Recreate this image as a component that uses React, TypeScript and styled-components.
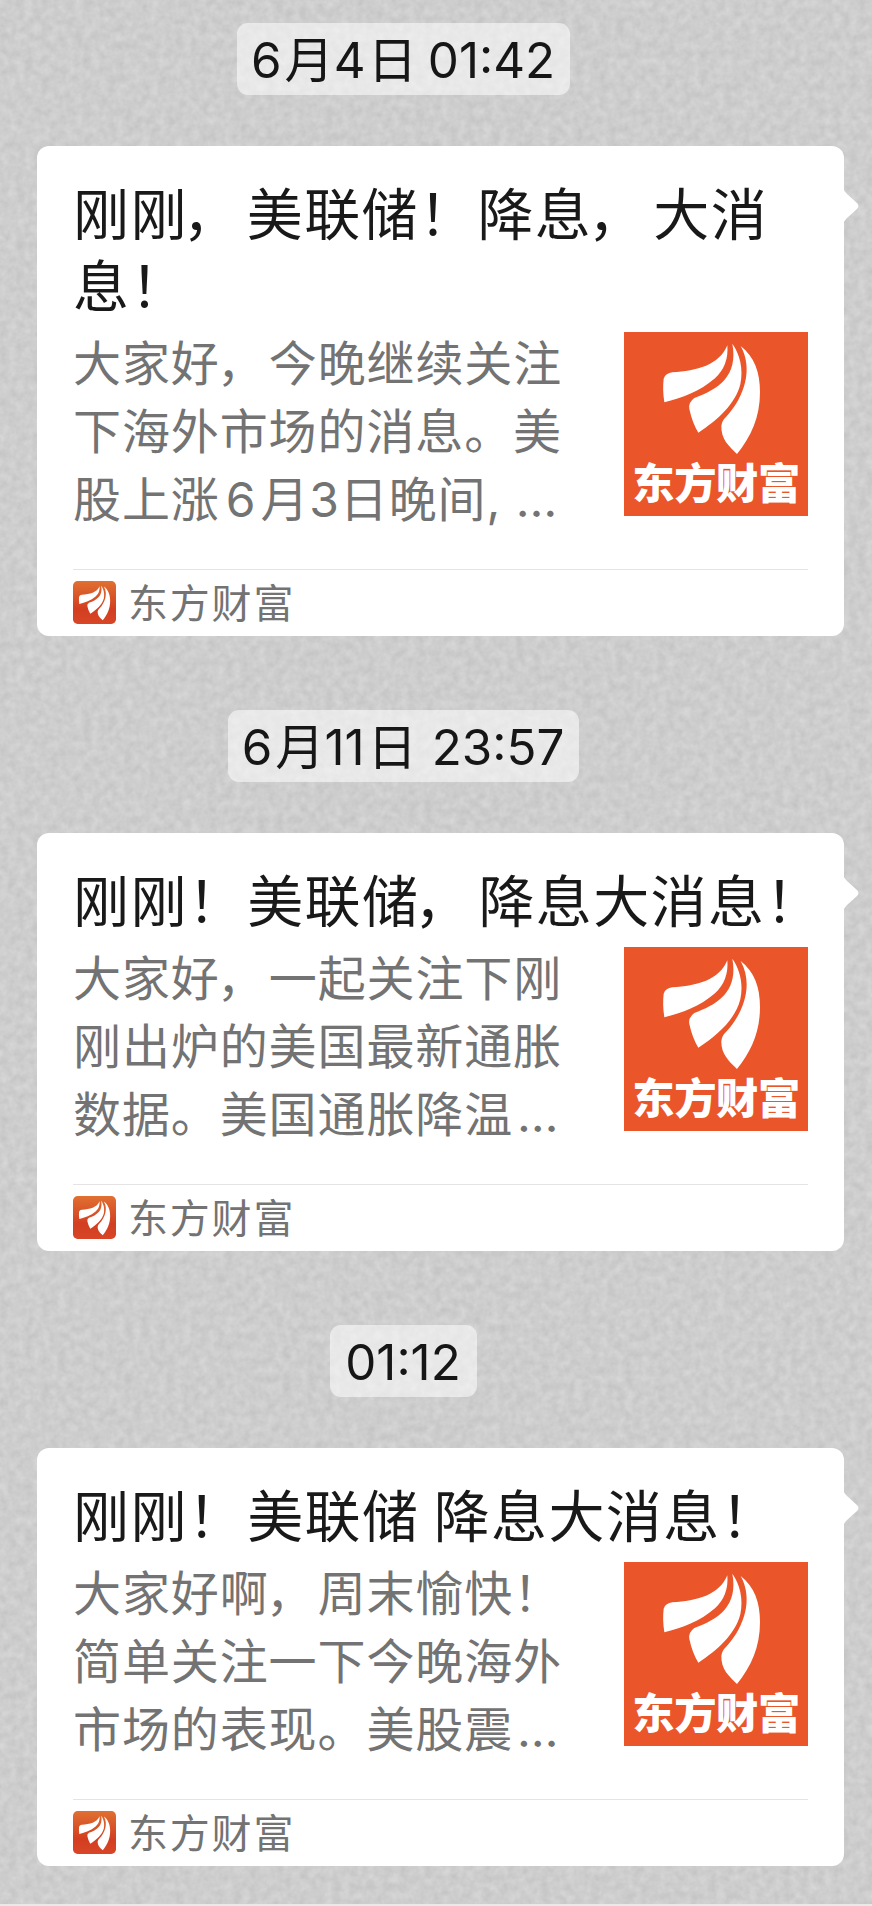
import React from 'react';
import styled, { createGlobalStyle } from 'styled-components';

const Global = createGlobalStyle`
  * { box-sizing: border-box; }
  body { margin: 0; background: #cdcdcd; }
`;

const Chat = styled.main`
  position: relative;
  display: flex;
  flex-direction: column;
  width: 872px;
  height: 1906px;
  overflow: hidden;
  padding: 23px 28px 0 37px;
  border-bottom: 2px solid #e9e9e9;
  background: #cdcdcd;
  font-family: Inter, 'Noto Sans CJK SC', sans-serif;
`;

const Grain = styled.svg`
  position: absolute;
  inset: 0;
  width: 100%;
  height: 100%;
`;

const Message = styled.section`
  position: relative;
  display: flex;
  flex-direction: column;
  width: 807px;
  margin-bottom: 74px;
`;

const Stamp = styled.time<{ $width: number }>`
  align-self: center;
  width: ${p => p.$width}px;
  height: 72px;
  margin: 0 75px 51px 0;
  border-radius: 11px;
  background: rgba(255, 255, 255, 0.55);
  color: #161616;
  font-size: 49.3px;
  line-height: 74px;
  text-align: center;
  white-space: pre;
`;

const Card = styled.article`
  position: relative;
  padding: 33px 36px 0;
  border-radius: 12px;
  background: #fff;
`;

const Tail = styled.svg`
  position: absolute;
  left: 806px;
  top: 42px;
  width: 16px;
  height: 36px;
`;

const Title = styled.h2`
  margin: 0;
  color: #191919;
  font-size: 56px;
  font-weight: 400;
  line-height: 72px;
  letter-spacing: 1.4px;
  white-space: pre;
`;

const Summary = styled.div`
  display: flex;
  justify-content: space-between;
  height: 210px;
  margin-top: 7px;
`;

const Excerpt = styled.div`
  color: #737373;
  font-size: 48px;
  line-height: 68px;
  letter-spacing: 0.9px;
  white-space: pre;
`;

const Row = styled.div`
  display: block;
`;

const Kern = styled.span<{ $gap: number }>`
  margin-left: ${p => p.$gap}px;
`;

const Tight = styled.span<{ $gap: number }>`
  letter-spacing: ${p => p.$gap}px;
`;

const Thumb = styled.svg`
  width: 184px;
  height: 184px;
  margin-top: 2px;
  flex: none;
`;

const Source = styled.footer`
  display: flex;
  gap: 12px;
  height: 67px;
  margin-top: 29px;
  border-top: 1px solid #e4e4e4;
  color: #737373;
  font-size: 40px;
  line-height: 68px;
  letter-spacing: 1.8px;
`;

const AppIcon = styled.svg`
  width: 43px;
  height: 43px;
  margin-top: 11px;
  flex: none;
`;

const Leaves = () => (
  <g fill="#fff">
    <path d="M310 40C286 99 219 117 145 121Q125 123 119 140Q115 174 121 211C174 198 228 178 273 139Q315 100 310 40Z" />
    <path d="M325 35C347 66 359 110 349 157C334 216 282 264 223 302Q205 273 196 231Q192 212 211 198C284 171 343 132 325 35Z" />
    <path d="M350 42C391 75 408 119 408 180C408 256 381 314 339 366C314 342 291 321 292 282Q293 267 308 253C362 193 388 111 350 42Z" />
  </g>
);

// A line of text; a number widens or tightens the gap between its neighbours.
type Line = (string | number)[];

const Pieces = ({ line }: { line: Line }) => (
  <>
    {line.map((piece, i) => {
      if (typeof piece === 'number') return piece > 0 ? <Kern key={i} $gap={piece} /> : null;
      const next = line[i + 1];
      if (typeof next === 'number' && next < 0) {
        return (
          <React.Fragment key={i}>
            {piece.slice(0, -1)}
            <Tight $gap={next}>{piece.slice(-1)}</Tight>
          </React.Fragment>
        );
      }
      return <React.Fragment key={i}>{piece}</React.Fragment>;
    })}
  </>
);

const Rows = ({ lines }: { lines: Line[] }) => (
  <>
    {lines.map((line, i) => (
      <Row key={i}><Pieces line={line} /></Row>
    ))}
  </>
);

interface Item {
  stamp: Line;
  width: number;
  title: Line[];
  excerpt: Line[];
}

const items: Item[] = [
  {
    stamp: ['6', 3, '月4', 2, '日', -3, ' 01:42'],
    width: 333,
    title: [['刚刚', -4, '，', 7, '美联储！', 1, '降息', -3, '，', 8, '大消'], ['息！']],
    excerpt: [
      ['大家好', -2, '，', 3, '今晚继续关注'],
      ['下海外市场的消息。美'],
      ['股上涨', 6, '6', 4, '月3日晚间, …'],
    ],
  },
  {
    stamp: ['6', 3, '月11', 3, '日', 1, ' 23:57'],
    width: 351,
    title: [['刚刚！', 2, '美联储', -4, '，', 7, '降息大消息！']],
    excerpt: [
      ['大家好', -2, '，', 3, '一起关注下刚'],
      ['刚出炉的美国最新通胀'],
      ['数据。美国通胀降温', 4, '…'],
    ],
  },
  {
    stamp: ['01:12'],
    width: 147,
    title: [['刚刚！', 2, '美联储', -1.5, ' 降息大消息！']],
    excerpt: [
      ['大家好啊', -2, '，', 3, '周末愉快！'],
      ['简单关注一下今晚海外'],
      ['市场的表现。美股震', 4, '…'],
    ],
  },
];

export default function App() {
  return (
    <Chat>
      <Global />
      <Grain aria-hidden="true">
        <filter id="grain" x="0" y="0" width="100%" height="100%" colorInterpolationFilters="sRGB">
          <feTurbulence type="fractalNoise" baseFrequency="0.12" numOctaves="3" seed="4" />
          <feColorMatrix values="0.1 0 0 0 0.755  0.1 0 0 0 0.755  0.1 0 0 0 0.755  0 0 0 0 1" />
        </filter>
        <linearGradient id="icon" x1="0" y1="0" x2="0" y2="1">
          <stop offset="0" stopColor="#e07032" />
          <stop offset="0.65" stopColor="#d33e20" />
          <stop offset="1" stopColor="#d84527" />
        </linearGradient>
        <rect width="872" height="1906" filter="url(#grain)" />
      </Grain>
      {items.map((item, i) => (
        <Message key={i}>
          <Stamp $width={item.width}><Pieces line={item.stamp} /></Stamp>
          <Card>
            <Tail viewBox="0 0 16 36">
              <path d="M0 0Q1 3 4 6L14 15Q17 18 14 21L4 30Q1 33 0 36Z" fill="#fff" />
            </Tail>
            <Title><Rows lines={item.title} /></Title>
            <Summary>
              <Excerpt><Rows lines={item.excerpt} /></Excerpt>
              <Thumb viewBox="0 0 552 552">
                <rect width="552" height="552" fill="#ea5529" />
                <Leaves />
                <text x="25" y="502" textLength="504" fill="#fff" fontFamily="Noto Sans CJK SC" fontWeight="900" fontSize="127">东方财富</text>
              </Thumb>
            </Summary>
            <Source>
              <AppIcon viewBox="0 0 128 128">
                <rect width="128" height="128" rx="14" fill="url(#icon)" />
                <g transform="translate(-20 3) scale(.32 .312)"><Leaves /></g>
              </AppIcon>
              东方财富
            </Source>
          </Card>
        </Message>
      ))}
    </Chat>
  );
}
